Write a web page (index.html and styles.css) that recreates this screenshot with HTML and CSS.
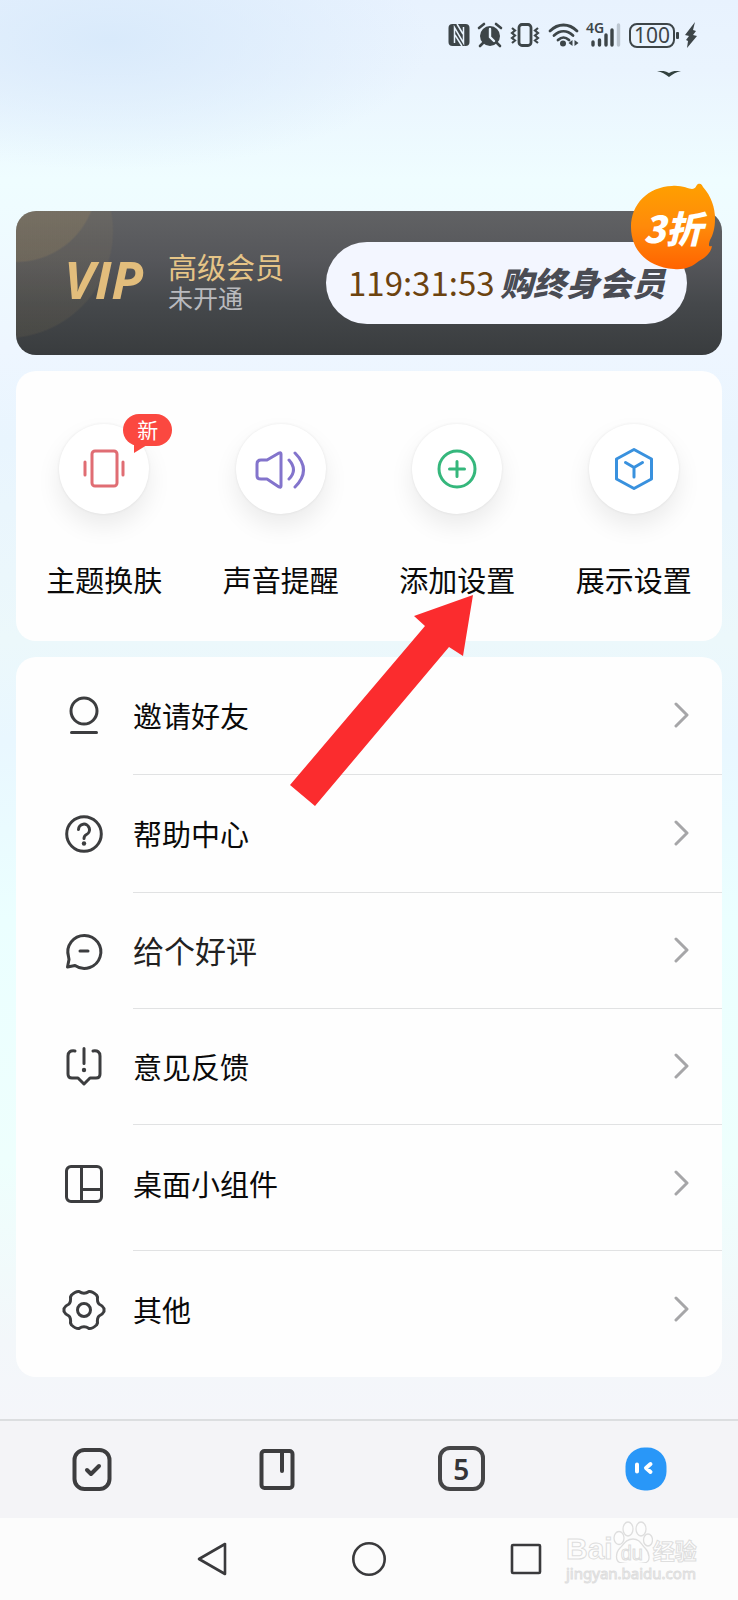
FILE: index.html
```html
<!DOCTYPE html>
<html lang="zh-CN">
<head>
<meta charset="utf-8">
<meta name="viewport" content="width=device-width, initial-scale=1">
<title>我的</title>
<link rel="stylesheet" href="styles.css">
</head>
<body>
<div class="app">
  <header class="status">
    <svg width="22" height="24" viewBox="0 0 22 24"><rect x="0.500" y="1" width="21" height="22" rx="4" fill="#3d4548"/><path d="M6.500 20V4.500L15.500 20V4M7 12l7 11M9 1l6 10" fill="none" stroke="#e9f4fe" stroke-width="1.500"/></svg>
    <svg width="26" height="26" viewBox="0 0 26 26"><circle cx="13" cy="14" r="10" fill="#3d4548"/><path d="M2 6l5-4M24 6l-5-4M6 21l-3 3M20 21l3 3" stroke="#3d4548" stroke-width="2.6" stroke-linecap="round"/><path d="M13 7v8l4 4" fill="none" stroke="#e9f4fe" stroke-width="2.4" stroke-linecap="round"/></svg>
    <svg width="30" height="26" viewBox="0 0 30 26" fill="none" stroke="#3d4548"><rect x="9" y="2.500" width="12" height="21" rx="3" stroke-width="2.800"/><path d="M2 6l3 2.500-3 2.500 3 2.500-3 2.500 3 2.500-3 2.500M28 6l-3 2.500 3 2.500-3 2.500 3 2.500-3 2.500 3 2.500" stroke-width="2.200"/></svg>
    <svg width="32" height="26" viewBox="0 0 32 26" fill="none" stroke="#3d4548" stroke-width="2.800" stroke-linecap="round"><path d="M3 9C11 1 22 1 30 9M7 13.500c6-5.500 13-5.500 19 0M11 18c4-3.500 7-3.500 11 0"/><circle cx="16" cy="21.500" r="3" fill="#3d4548" stroke="none"/><path d="M25.500 18v6L21.500 21zM27.500 18v6l4-3z" fill="#3d4548" stroke="none"/></svg>
    <span class="signal"><span class="signal-label">4G</span>
      <svg width="36" height="26" viewBox="0 0 36 26" stroke-width="3.400" stroke-linecap="round" stroke="#3d4548"><path d="M7 20v3M13.500 18v5M20 13v10M26 8v15"/><path d="M32.500 3v20" stroke="#bcc6d0"/></svg></span>
    <span class="battery">100</span>
    <svg width="12" height="26" viewBox="0 0 12 26"><path fill="#3d4548" d="M10 0L0 13l4 1-3 4 2 1-1 7 10-12-4-1 3-4-3-1z"/></svg>
  </header>

  <main class="content">
    <div class="peek"><svg width="24" height="7" viewBox="0 0 24 7"><path fill="#33423f" d="M0 0c4-1 8 0 12 2 4-2 8-3 12-2-5 1-8 3-12 6C8 3 5 1 0 0z"/></svg></div>

    <section class="vip">
      <span class="vip-glow"></span>
      <strong class="vip-logo">VIP</strong>
      <div class="vip-info">
        <h1 class="vip-title">高级会员</h1>
        <p class="vip-state">未开通</p>
      </div>
      <button class="buy" type="button"><span class="timer">119:31:53</span><span class="buy-label">购终身会员</span></button>
      <span class="sale">
        <svg class="sale-shape" width="92" height="92" viewBox="0 0 92 92"><defs><linearGradient id="sale" x1="0" y1="0" x2="0" y2="1"><stop offset="0" stop-color="#ffa000"/><stop offset=".5" stop-color="#ff8a0a"/><stop offset="1" stop-color="#ff6300"/></linearGradient></defs><path fill="url(#sale)" d="M45 5c9-1 17 3 20 3 4 0 4-4 6-5 3-1 4 1 5 3 8 9 12 20 12 32 0 9-2 16-5 21-2 6-1 7 2 6-1 7-7 12-13 15-7 6-15 9-25 8C20 86 4 69 4 46S21 6 45 5z"/></svg>
        <span class="sale-text">3折</span>
      </span>
    </section>

    <ul class="actions">
      <li class="action"><button class="action-button" type="button"><span class="disc">
        <svg width="52" height="52" viewBox="0 0 52 52" fill="none" stroke="#e06d73" stroke-width="3" stroke-linecap="round" stroke-linejoin="round"><rect x="14" y="8" width="25" height="35" rx="3"/><path d="M7 19v13M45 19v13"/></svg></span><span>主题换肤</span></button>
        <span class="new">新<svg class="new-tail" width="14" height="10" viewBox="0 0 14 10"><path fill="#fb4840" d="M1 0v9l13-8z"/></svg></span></li>
      <li class="action"><button class="action-button" type="button"><span class="disc">
        <svg width="52" height="52" viewBox="0 0 52 52" fill="none" stroke="#8374cc" stroke-width="3" stroke-linecap="round" stroke-linejoin="round"><path d="M6 17q-4 0-4 4v12q0 3 4 3h6l12 8q2 1 2-1V11q0-2-2-1l-12 7zM34 17q9 10 0 19M40 10q17 17 0 34"/></svg></span><span>声音提醒</span></button></li>
      <li class="action"><button class="action-button" type="button"><span class="disc">
        <svg width="52" height="52" viewBox="0 0 52 52" fill="none" stroke="#35b77c" stroke-width="3" stroke-linecap="round"><circle cx="26" cy="26" r="18"/><path d="M18.500 26h15M26 18.500v15"/></svg></span><span>添加设置</span></button>
        <svg class="pointer" width="184" height="212" viewBox="0 0 184 212"><path fill="#fb2c2e" d="M183 0l-59 21 11 10L0 190l25 21L159 52l14 9z"/></svg></li>
      <li class="action"><button class="action-button" type="button"><span class="disc">
        <svg width="52" height="52" viewBox="0 0 52 52" fill="none" stroke="#3991de" stroke-width="3" stroke-linecap="round" stroke-linejoin="round"><path d="M26 6.500L43.500 16v20L26 45.500 8.500 36V16zM17.500 19.500L26 24.500l8.500-5M26 24.500V34"/></svg></span><span>展示设置</span></button></li>
    </ul>

    <nav class="menu">
      <a class="row" href="#invite"><svg class="row-icon" viewBox="0 0 44 44"><circle cx="22" cy="17" r="13"/><path d="M9.500 38.500h25" stroke-width="3"/></svg><span class="row-text">邀请好友<svg class="chevron" viewBox="0 0 16 26"><path d="M2 2l11 11L2 24"/></svg></span></a>
      <a class="row" href="#help"><svg class="row-icon" viewBox="0 0 44 44"><circle cx="22" cy="22" r="17.300"/><path d="M16.500 17.500a5.500 5.500 0 1 1 8 5c-2 1-2.500 2-2.500 4"/><circle cx="22" cy="31.500" r="2.200" class="dot"/></svg><span class="row-text">帮助中心<svg class="chevron" viewBox="0 0 16 26"><path d="M2 2l11 11L2 24"/></svg></span></a>
      <a class="row row-short row-large" href="#rate"><svg class="row-icon" viewBox="0 0 44 44"><path d="M13 36.500a16.500 16.500 0 1 0-6.500-9l.5 3-1.500 7.500zM18 22h8"/></svg><span class="row-text">给个好评<svg class="chevron" viewBox="0 0 16 26"><path d="M2 2l11 11L2 24"/></svg></span></a>
      <a class="row row-short" href="#feedback"><svg class="row-icon" viewBox="0 0 44 44"><path d="M13 6q-7-1-7 5v18q0 4 4 4h6l6 6 6-6h6q4 0 4-4v-18q0-6-7-5M22 3.500v15"/><circle cx="22" cy="25" r="2.200" class="dot"/></svg><span class="row-text">意见反馈<svg class="chevron" viewBox="0 0 16 26"><path d="M2 2l11 11L2 24"/></svg></span></a>
      <a class="row row-spaced" href="#widgets"><svg class="row-icon" viewBox="0 0 44 44"><rect x="4.500" y="4.500" width="35" height="35" rx="4.500"/><path d="M19.500 5v34M20 27.500h19"/></svg><span class="row-text">桌面小组件<svg class="chevron" viewBox="0 0 16 26"><path d="M2 2l11 11L2 24"/></svg></span></a>
      <a class="row row-spaced row-last" href="#other"><svg class="row-icon" viewBox="0 0 44 44"><path d="M17 3.500Q14 3 9.500 7L8.500 9Q9 14 7 16 3 18 2 20.500v3Q3 26 7 28q2 2 1.500 7l1 2q4.500 4 7.500 3.500 5-3.500 10 0 3 .5 7.500-3.500l1-2Q35 30 37 28q4-2 5-4.500v-3Q41 18 37 16q-2-2-1.500-7l-1-2Q30 3 27 3.500q-5 3.500-10 0z"/><circle cx="22" cy="22" r="6.500"/></svg><span class="row-text">其他<svg class="chevron" viewBox="0 0 16 26"><path d="M2 2l11 11L2 24"/></svg></span></a>
    </nav>
  </main>

  <nav class="tabs">
    <a class="tab" href="#todo" aria-label="待办"><svg width="48" height="48" viewBox="0 0 48 48"><rect x="6.500" y="5" width="35" height="39" rx="10"/><path d="M19 25l4 4 8-8"/></svg></a>
    <a class="tab" href="#notes" aria-label="笔记"><svg width="48" height="48" viewBox="0 0 48 48"><rect x="8.500" y="6" width="31" height="37" rx="3"/><path d="M29 7v19"/></svg></a>
    <a class="tab" href="#calendar"><span class="tab-date">5</span></a>
    <a class="tab" href="#me" aria-label="我的"><svg width="48" height="48" viewBox="0 0 48 48"><rect x="3.500" y="2.500" width="41" height="43" rx="19" class="face"/><path d="M15 19.500v7M28.500 19l-4.500 4 4.500 4" class="eyes"/></svg></a>
  </nav>

  <footer class="system">
    <button class="key" type="button" aria-label="返回"><svg width="34" height="36" viewBox="0 0 34 36"><path d="M4 18L30 3v30z"/></svg></button>
    <button class="key" type="button" aria-label="主页"><svg width="34" height="36" viewBox="0 0 34 36"><circle cx="17" cy="18" r="15.700"/></svg></button>
    <button class="key" type="button" aria-label="最近"><svg width="34" height="36" viewBox="0 0 34 36"><rect x="3" y="4" width="28" height="28" rx="1"/></svg></button>
    <div class="mark">
      <div class="mark-top"><span class="mark-bai">Bai</span><span class="paw"><svg width="40" height="42" viewBox="0 0 40 42" fill="#fdfdfd" stroke="#dedede" stroke-width="1.300"><path d="M20 18c7 0 8 5 12 9s7 14-1 15c-7 1-15 1-22 0-8-1-6-11-2-15s6-9 13-9z"/><ellipse cx="6" cy="17" rx="5" ry="6.500"/><ellipse cx="15" cy="8" rx="5" ry="7"/><ellipse cx="28" cy="8" rx="5" ry="7"/><ellipse cx="35" cy="19" rx="4.500" ry="6"/></svg><span class="paw-text">du</span></span><span class="mark-cn">经验</span></div>
      <span class="mark-url">jingyan.baidu.com</span>
    </div>
  </footer>
</div>
</body>
</html>
```
FILE: styles.css
```css
* {
  box-sizing: border-box;
}

body {
  margin: 0;
  font-family: "Noto Sans CJK SC", sans-serif;
  color: #0a0a0a;
}

svg {
  display: block;
  flex: none;
}

button {
  border: 0;
  padding: 0;
  background: none;
  font: inherit;
  color: inherit;
}

a {
  color: inherit;
  text-decoration: none;
}

.app {
  min-height: 100vh;
  display: flex;
  flex-direction: column;
  background:
    radial-gradient(ellipse 320px 130px at 110px 40px, #d9eafb 0%, #d9eafb00 100%),
    linear-gradient(#e8f2fe 0, #eaf4fe 70px, #effdff 180px, #eef6ff 350px, #e9f5fe 440px, #ecf8fb 640px, #e9f7ff 740px, #ebffff 920px, #eefffd 1160px, #f3f7fa 1340px, #f5f6fa 1420px);
}

.status {
  height: 70px;
  padding-right: 41px;
  display: flex;
  align-items: center;
  justify-content: flex-end;
  gap: 7px;
  color: #3d4548;
}

.signal {
  position: relative;
}

.signal-label {
  position: absolute;
  left: 0;
  top: -2px;
  font: 600 14px/16px "Noto Sans", sans-serif;
}

.battery {
  position: relative;
  width: 46px;
  height: 25px;
  margin-right: 3px;
  border: 2px solid #3d4548;
  border-radius: 8px;
  text-align: center;
  font: 21px/21px "Noto Sans", sans-serif;
}

.battery::after {
  content: "";
  position: absolute;
  right: -6px;
  top: 7px;
  width: 3px;
  height: 7px;
  border-radius: 1px;
  background: #3d4548;
}

.content {
  flex: 1;
  padding: 0 16px 40px;
  display: flex;
  flex-direction: column;
  gap: 16px;
}

.peek {
  height: 125px;
  padding: 1px 41px 0 0;
  display: flex;
  justify-content: flex-end;
}

.vip {
  position: relative;
  height: 144px;
  padding: 0 35px 0 48px;
  border-radius: 20px;
  display: flex;
  align-items: center;
  background: linear-gradient(#616264, #55565a 35%, #45484b 65%, #393c3e);
}

.vip-glow {
  position: absolute;
  inset: 0;
  border-radius: 20px;
  background:
    radial-gradient(circle at 0 -30px, #b0956030 0 80px, #b0956000 82px),
    radial-gradient(circle at -10px 20px, #b095601a 0 106px, #b0956000 108px);
}

.vip-logo {
  position: relative;
  width: 104px;
  padding-bottom: 8px;
  font: italic 700 52px/60px "Open Sans", sans-serif;
  color: #e2bd7c;
}

.vip-info {
  position: relative;
  flex: 1;
  padding-bottom: 6px;
}

.vip-title,
.vip-state {
  margin: 0;
  font-weight: 400;
}

.vip-title {
  font-size: 29px;
  line-height: 34px;
  color: #e6c587;
}

.vip-state {
  font-size: 25px;
  line-height: 28px;
  color: #b9babe;
}

.buy {
  height: 82px;
  width: 361px;
  padding: 0 22px 2px;
  border-radius: 41px;
  display: flex;
  align-items: center;
  justify-content: space-between;
  background: #f3f6ff;
  white-space: nowrap;
}

.timer {
  font-size: 33px;
  color: #6c430f;
}

.buy-label {
  font-size: 33px;
  font-weight: 900;
  font-style: italic;
  color: #4a4c54;
}

.sale {
  position: absolute;
  right: 3px;
  top: -30px;
  width: 92px;
  height: 92px;
  display: grid;
  place-items: center;
}

.sale-shape {
  position: absolute;
  inset: 0;
}

.sale-text {
  position: relative;
  font-size: 37px;
  line-height: 42px;
  font-weight: 900;
  font-style: italic;
  color: #fff;
}

.actions {
  height: 270px;
  margin: 0;
  padding: 0;
  list-style: none;
  display: grid;
  grid-template-columns: repeat(4, 1fr);
  border-radius: 20px;
  background: #fefefe;
}

.action {
  position: relative;
}

.action-button {
  width: 100%;
  padding-top: 53px;
  display: flex;
  flex-direction: column;
  align-items: center;
  gap: 44px;
  font-size: 29px;
  line-height: 42px;
}

.disc {
  width: 90px;
  height: 90px;
  border-radius: 50%;
  display: grid;
  place-items: center;
  background: #fff;
  box-shadow: 0 0 3px #00000014, 0 12px 24px #00000014;
}

.new {
  position: absolute;
  left: calc(50% + 19px);
  top: 43px;
  width: 49px;
  height: 32px;
  border-radius: 16px;
  background: #fb4840;
  color: #fff;
  font-size: 21px;
  line-height: 31px;
  text-align: center;
}

.new-tail {
  position: absolute;
  left: 10px;
  top: 30px;
}

.pointer {
  position: absolute;
  left: calc(50% - 167px);
  top: 224px;
  z-index: 1;
  pointer-events: none;
}

.menu {
  border-radius: 20px;
  background: #fefefe;
  font-size: 29px;
}

.row {
  display: flex;
  align-items: stretch;
  gap: 27px;
  padding-left: 46px;
  height: 118px;
}

.row-short {
  height: 116px;
}

.row-icon {
  width: 44px;
  height: 44px;
  align-self: center;
  fill: none;
  stroke: #3c3d3f;
  stroke-width: 3;
  stroke-linecap: round;
  stroke-linejoin: round;
}

.dot {
  fill: #3c3d3f;
  stroke: none;
}

.row-text {
  flex: 1;
  padding: 0 32px 2px 0;
  display: flex;
  align-items: center;
  justify-content: space-between;
  border-bottom: 1px solid #e1e2e3;
}

.row-large {
  font-size: 31px;
  color: #222;
}

.row-spaced {
  height: 126px;
}

.row-spaced .row-text {
  padding-bottom: 10px;
}

.row-spaced .row-icon {
  margin-bottom: 8px;
}

.row-last .row-text {
  border-bottom: 0;
}

.chevron {
  width: 16px;
  height: 26px;
  fill: none;
  stroke: #a6a6a8;
  stroke-width: 3;
  stroke-linecap: round;
  stroke-linejoin: round;
}

.tabs {
  height: 99px;
  padding-bottom: 2px;
  border-top: 2px solid #dcdee0;
  background: #f4f4f7;
  display: grid;
  grid-template-columns: repeat(4, 1fr);
  place-items: center;
}

.tab svg {
  fill: none;
  stroke: #3d3d3f;
  stroke-width: 4;
  stroke-linecap: round;
  stroke-linejoin: round;
}

.tab .face {
  fill: #2997f8;
  stroke: none;
}

.tab .eyes {
  stroke: #fff;
}

.tab-date {
  width: 47px;
  height: 45px;
  border: 4px solid #454547;
  border-radius: 12px;
  display: grid;
  place-items: center;
  font: 600 28px/36px "Noto Sans", sans-serif;
  color: #353537;
}

.system {
  position: relative;
  height: 82px;
  background: #fcfcfc;
  display: flex;
  align-items: center;
  justify-content: center;
  gap: 123px;
}

.key svg {
  fill: none;
  stroke: #3a3a3c;
  stroke-width: 2.6;
  stroke-linejoin: round;
}

.mark {
  position: absolute;
  right: 36px;
  top: 0;
  width: 136px;
  color: #fdfdfd;
  -webkit-text-stroke: 1px #dedede;
}

.mark-top {
  height: 45px;
  display: flex;
  align-items: flex-end;
}

.mark-bai {
  font: 700 30px/28px "Liberation Sans", sans-serif;
}

.paw {
  position: relative;
}

.paw-text {
  position: absolute;
  left: 8px;
  bottom: 0;
  font: 20px/20px "Liberation Sans", sans-serif;
}

.mark-cn {
  font-size: 22px;
  line-height: 28px;
  font-weight: 700;
}

.mark-url {
  display: block;
  font: 15px/20px "Noto Sans", sans-serif;
}
```
